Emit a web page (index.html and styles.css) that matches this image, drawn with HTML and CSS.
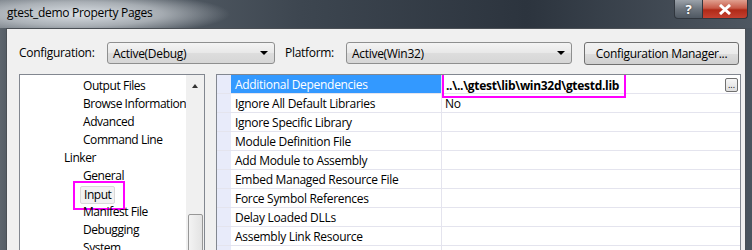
FILE: index.html
```html
<!DOCTYPE html>
<html lang="en">
<head>
  <meta charset="UTF-8" />
  <title>gtest_demo Property Pages</title>
  <link rel="stylesheet" href="styles.css">
</head>
<body>
  <div class="window">
    <div class="titlebar">
      <span class="title">gtest_demo Property Pages</span>
      <div class="caption-btns">
        <div class="cap-btn help">?</div>
        <div class="cap-btn close">
          <svg width="14" height="11" viewBox="0 0 14 11"><path d="M2 1 L12 10 M12 1 L2 10" stroke="#fff" stroke-width="3"/></svg>
        </div>
      </div>
    </div>

    <div class="client">
      <div class="toolbar">
        <label class="lbl cfg-lbl">Configuration:</label>
        <div class="combo cfg-combo">Active(Debug)<span class="arrow"></span></div>
        <label class="lbl plat-lbl">Platform:</label>
        <div class="combo plat-combo">Active(Win32)<span class="arrow"></span></div>
        <button type="button" class="mgr-btn">Configuration Manager...</button>
      </div>

      <div class="panels">
        <div class="tree">
          <ul class="tree-list">
            <li class="lv2">Output Files</li>
            <li class="lv2">Browse Information</li>
            <li class="lv2">Advanced</li>
            <li class="lv2">Command Line</li>
            <li class="lv1">Linker</li>
            <li class="lv2">General</li>
            <li class="lv2"><span class="mark"><span class="sel">Input</span></span></li>
            <li class="lv2">Manifest File</li>
            <li class="lv2">Debugging</li>
            <li class="lv2">System</li>
          </ul>
          <div class="vscroll">
            <span class="up"></span>
            <div class="thumb"></div>
          </div>
        </div>

        <div class="grid">
          <div class="row selected">
            <div class="gutter"></div>
            <div class="name">Additional Dependencies</div>
            <div class="value"><span class="val-mark">..\..\gtest\lib\win32d\gtestd.lib</span><span class="dots">...</span></div>
          </div>
          <div class="row"><div class="gutter"></div><div class="name">Ignore All Default Libraries</div><div class="value">No</div></div>
          <div class="row"><div class="gutter"></div><div class="name">Ignore Specific Library</div><div class="value"></div></div>
          <div class="row"><div class="gutter"></div><div class="name">Module Definition File</div><div class="value"></div></div>
          <div class="row"><div class="gutter"></div><div class="name">Add Module to Assembly</div><div class="value"></div></div>
          <div class="row"><div class="gutter"></div><div class="name">Embed Managed Resource File</div><div class="value"></div></div>
          <div class="row"><div class="gutter"></div><div class="name">Force Symbol References</div><div class="value"></div></div>
          <div class="row"><div class="gutter"></div><div class="name">Delay Loaded DLLs</div><div class="value"></div></div>
          <div class="row"><div class="gutter"></div><div class="name">Assembly Link Resource</div><div class="value"></div></div>
          <div class="row"><div class="gutter"></div><div class="name"></div><div class="value"></div></div>
        </div>
      </div>
    </div>
  </div>
</body>
</html>
```

FILE: styles.css
```css
body {
  margin: 0;
  font-family: "Open Sans", "Noto Sans", Arial, sans-serif;
  font-size: 12px;
  letter-spacing: -0.3px;
  color: #000;
  background: #3a434d;
}
.window {
  width: 752px;
  height: 250px;
  overflow: hidden;
  display: flex;
  flex-direction: column;
  background: linear-gradient(to right, #5d656d 0%, #3f4852 3%, #333c46 60%, #4a545e 100%);
}
.titlebar {
  height: 28px;
  flex: none;
  display: flex;
  align-items: flex-start;
  background: radial-gradient(ellipse 150px 22px at 80px 14px, rgba(225,230,235,0.95) 0%, rgba(200,205,210,0.7) 55%, rgba(120,128,136,0) 100%),
              linear-gradient(to right, #6b737b 0%, #3d4650 40%, #2c343e 70%, #4e5761 100%);
}
.title {
  margin: 5px 0 0 7px;
  line-height: 16px;
}
.caption-btns {
  margin-left: auto;
  margin-right: 4px;
  display: flex;
  height: 19px;
}
.cap-btn {
  height: 18px;
  border: 1px solid #30363e;
  border-top: none;
  display: flex;
  align-items: center;
  justify-content: center;
}
.help {
  width: 27px;
  border-radius: 0 0 0 4px;
  background: linear-gradient(#9ba2aa, #6d757e 50%, #4f5862);
  color: #fff;
  font-weight: bold;
  font-size: 13px;
  text-shadow: 0 0 2px #333;
}
.close {
  width: 44px;
  border-left: none;
  border-radius: 0 0 4px 0;
  background: linear-gradient(#e0a090, #c75a48 45%, #b02a18 55%, #c44030);
}
.client {
  flex: 1;
  margin: 0 6px;
  border: 1px solid #4a4f55;
  border-bottom: none;
  background: #f0f0f0;
  padding: 13px 0 0 12px;
}
.toolbar {
  display: flex;
  align-items: center;
  height: 22px;
}
.lbl {
  line-height: 16px;
}
.cfg-lbl {
  width: 88px;
}
.combo {
  position: relative;
  box-sizing: border-box;
  height: 22px;
  padding: 2px 0 0 5px;
  border: 1px solid #8e8f8f;
  border-radius: 3px;
  background: linear-gradient(#f4f4f4, #e8e8e8 50%, #dddddd 51%, #d6d6d6);
}
.cfg-combo {
  width: 168px;
}
.plat-lbl {
  margin-left: 10px;
  width: 61px;
}
.plat-combo {
  width: 226px;
}
.arrow {
  position: absolute;
  right: 6px;
  top: 8px;
  border-left: 4px solid transparent;
  border-right: 4px solid transparent;
  border-top: 4px solid #000;
}
.mgr-btn {
  margin-left: 12px;
  width: 155px;
  height: 23px;
  padding: 0;
  font: inherit;
  letter-spacing: inherit;
  color: #000;
  border: 1px solid #707070;
  border-radius: 3px;
  background: linear-gradient(#f2f2f2, #ebebeb 50%, #dddddd 51%, #cfcfcf);
}
.panels {
  display: flex;
  margin-top: 10px;
  gap: 11px;
}
.tree {
  width: 184px;
  height: 200px;
  border: 1px solid #828790;
  background: #fff;
  display: flex;
}
.tree-list {
  list-style: none;
  margin: 2px 0 0 0;
  padding: 0;
  flex: 1;
  white-space: nowrap;
  letter-spacing: -0.45px;
}
.tree-list li {
  height: 18px;
  line-height: 18px;
}
.lv1 {
  padding-left: 44px;
}
.lv2 {
  padding-left: 63px;
}
.mark {
  display: inline-block;
  margin-left: -10px;
  padding: 3px 8px 4px 5px;
  border: 2px solid #ff00ff;
  line-height: 16px;
  margin-top: -4px;
  vertical-align: top;
}
.sel {
  display: inline-block;
  padding: 0 3px;
  border: 1px solid #d9d9d9;
  border-radius: 2px;
  background: #f2f2f2;
}
.vscroll {
  width: 17px;
  flex: none;
  background: #f0f0f0;
  border-left: 1px solid #f0f0f0;
  position: relative;
}
.up {
  position: absolute;
  left: 5px;
  top: 9px;
  border-left: 3px solid transparent;
  border-right: 3px solid transparent;
  border-bottom: 4px solid #333;
}
.thumb {
  position: absolute;
  left: 1px;
  right: 1px;
  top: 139px;
  height: 60px;
  border: 1px solid #979797;
  border-radius: 2px;
  background: linear-gradient(to right, #f3f3f3, #e3e3e3);
}
.grid {
  width: 523px;
  height: 200px;
  border: 1px solid #828790;
  background: #fff;
  overflow: hidden;
}
.row {
  display: flex;
  height: 19px;
  border-bottom: 1px solid #e4e4ee;
  box-sizing: border-box;
}
.gutter {
  width: 14px;
  background: #e8ebfa;
}
.name {
  width: 206px;
  padding-left: 4px;
  line-height: 20px;
  border-right: 1px solid #e4e4ee;
  white-space: nowrap;
}
.selected .name {
  background: #3399ff;
  color: #fff;
}
.value {
  flex: 1;
  padding-left: 3px;
  line-height: 20px;
  position: relative;
}
.val-mark {
  display: inline-block;
  margin: -2px 0 0 -3px;
  padding: 0 5px 0 2px;
  border: 2px solid #ff00ff;
  font-weight: bold;
  line-height: 21px;
  vertical-align: top;
}
.dots {
  position: absolute;
  right: 2px;
  top: 3px;
  width: 13px;
  height: 14px;
  box-sizing: border-box;
  border: 1px solid #707070;
  border-radius: 2px;
  background: linear-gradient(#f6f6f6, #dedede);
  font-size: 9px;
  line-height: 12px;
  text-align: center;
  letter-spacing: 0;
}
```
